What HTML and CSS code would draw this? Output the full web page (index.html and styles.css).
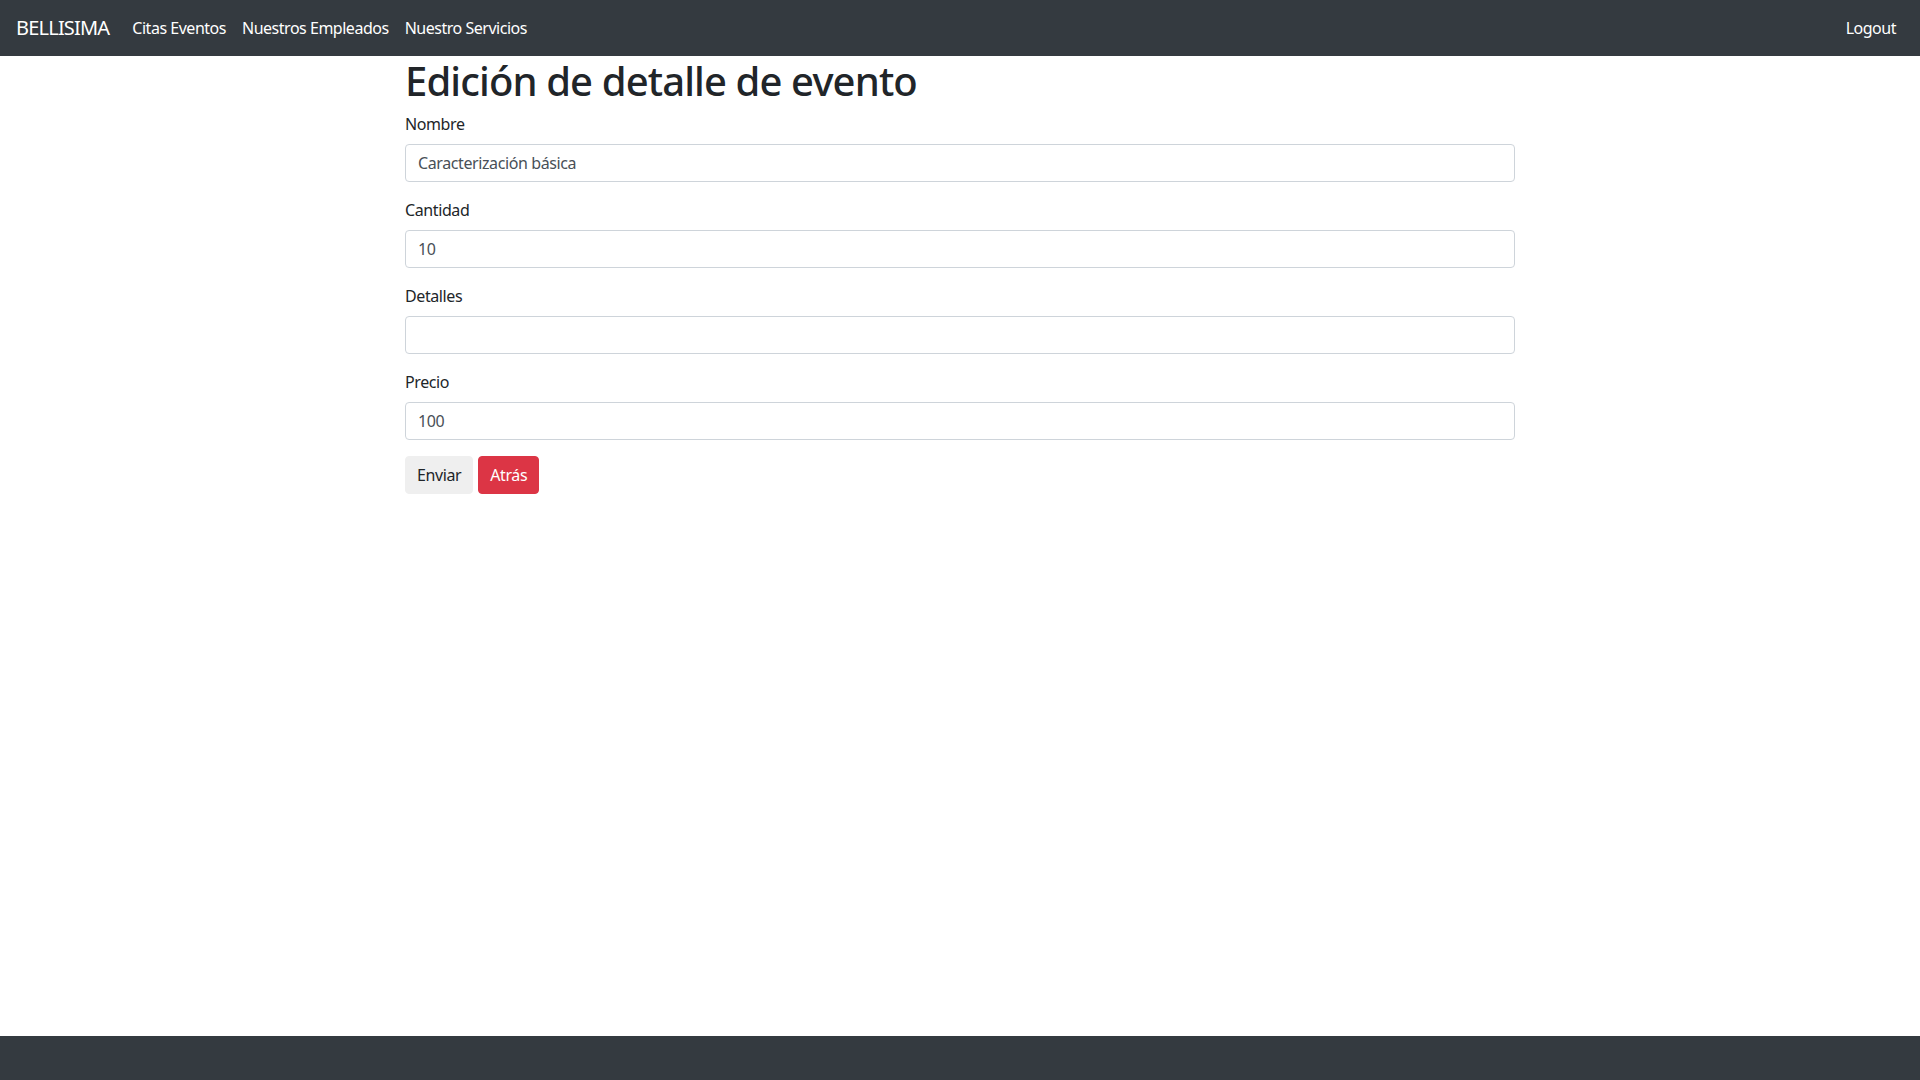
FILE: index.html
```html
<!DOCTYPE html>
<html lang="es">
<head>
<meta charset="utf-8">
<title>Edición de detalle de evento</title>
<link rel="stylesheet" href="styles.css">
</head>
<body>
<div class="page">
  <nav class="navbar">
    <a class="brand" href="#">BELLISIMA</a>
    <ul class="nav">
      <li><a class="nav-link" href="#">Citas Eventos</a></li>
      <li><a class="nav-link" href="#">Nuestros Empleados</a></li>
      <li><a class="nav-link" href="#">Nuestro Servicios</a></li>
    </ul>
    <ul class="nav nav-right">
      <li><a class="nav-link" href="#">Logout</a></li>
    </ul>
  </nav>
  <main class="container">
    <h1 class="title">Edición de detalle de evento</h1>
    <form class="form">
      <div class="form-group">
        <label class="label" for="nombre">Nombre</label>
        <input class="input" id="nombre" type="text" value="Caracterización básica">
      </div>
      <div class="form-group">
        <label class="label" for="cantidad">Cantidad</label>
        <input class="input" id="cantidad" type="text" value="10">
      </div>
      <div class="form-group">
        <label class="label" for="detalles">Detalles</label>
        <input class="input" id="detalles" type="text" value="">
      </div>
      <div class="form-group">
        <label class="label" for="precio">Precio</label>
        <input class="input" id="precio" type="text" value="100">
      </div>
      <div class="actions">
        <button class="btn btn-light" type="button">Enviar</button>
        <button class="btn btn-danger" type="button">Atrás</button>
      </div>
    </form>
  </main>
  <footer class="footer"></footer>
</div>
</body>
</html>
```
FILE: styles.css
```css
* { box-sizing: border-box; }
html, body { margin: 0; padding: 0; height: 100%; }
body {
  font-family: "Noto Sans", "Open Sans", sans-serif;
  font-size: 16px;
  line-height: 1.5;
  letter-spacing: -0.025em;
  color: #212529;
  background: #fff;
}
.page {
  min-height: 100%;
  display: flex;
  flex-direction: column;
}
.navbar {
  background: #343a40;
  height: 56px;
  display: flex;
  align-items: center;
  padding: 0 16px;
}
.brand {
  color: #fff;
  text-decoration: none;
  font-size: 20px;
  line-height: 30px;
  letter-spacing: -0.04em;
  margin-right: 15px;
}
.nav {
  list-style: none;
  margin: 0;
  padding: 0;
  display: flex;
}
.nav-right { margin-left: auto; }
.nav-link {
  display: block;
  color: #fff;
  text-decoration: none;
  padding: 8px 8px;
  font-size: 16px;
  letter-spacing: -0.03em;
}
.container {
  width: 1140px;
  margin: 0 auto;
  padding: 0 15px;
  flex: 1;
}
.title {
  font-size: 40px;
  font-weight: 500;
  line-height: 1.2;
  letter-spacing: -0.022em;
  margin: 1px 0 7px;
}
.form-group { margin-bottom: 16px; }
.label {
  display: inline-block;
  margin-bottom: 8px;
}
.input {
  display: block;
  width: 100%;
  height: 38px;
  padding: 6px 12px;
  font: inherit;
  font-size: 16px;
  letter-spacing: -0.025em;
  color: #495057;
  background: #fff;
  border: 1px solid #ced4da;
  border-radius: 4px;
}
.actions { display: flex; gap: 5px; }
.btn {
  font: inherit;
  font-size: 16px;
  letter-spacing: -0.025em;
  line-height: 24px;
  padding: 6px 11px;
  border: 1px solid transparent;
  border-radius: 4px;
}
.btn-light { background: #efefef; color: #212529; border-color: #efefef; }
.btn-danger { background: #dc3545; color: #fff; border-color: #dc3545; }
.footer {
  background: #343a40;
  height: 44px;
}
```
